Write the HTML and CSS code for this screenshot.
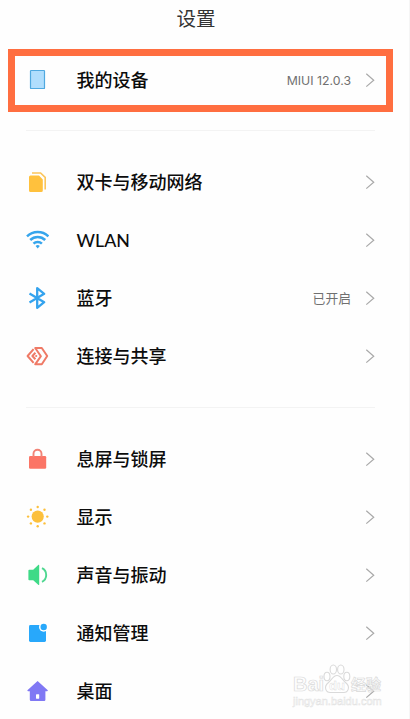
FILE: index.html
```html
<!doctype html>

<html lang="zh-CN">
<head>
  <meta charset="utf-8">

  <title>设置</title>
  <link rel="stylesheet" href="styles.css">
</head>

<body>
  <svg class="defs">
    <symbol id="arrow" viewBox="0 0 10 16">
      <path d="M1.3 1.8L8.7 8.2L1.3 14.6" fill="none" stroke="#a9a9a9" stroke-width="1.2"/>
    </symbol>
  </svg>
  <div class="page">
    <h1 class="title">设置</h1>

    <div class="highlight">
      <div class="row">
        <svg class="icon" viewBox="0 0 24 24">
          <rect x="5.5" y="2.5" width="14" height="18" rx="0.6" fill="#b0defd" stroke="#4fa9e0" stroke-width="1.2"/>
        </svg>
        <span class="label">我的设备</span>
        <span class="value latin">MIUI 12.0.3</span>
        <svg class="arrow"><use href="#arrow"/></svg>
      </div>
    </div>

    <div class="group">
      <div class="row">
        <svg class="icon" viewBox="0 0 24 24">
          <path d="M5.5 5.6H14L17.8 9.4V20.5a1.5 1.5 0 0 1-1.5 1.5H5.5A1.5 1.5 0 0 1 4 20.5V7.1a1.5 1.5 0 0 1 1.5-1.5z" fill="#ffc13d"/>
          <path d="M7 3H15.6L20.2 7.4V19.5" fill="none" stroke="#fbc55a" stroke-width="1.6"/>
        </svg>
        <span class="label">双卡与移动网络</span>
        <svg class="arrow"><use href="#arrow"/></svg>
      </div>
      <div class="row">
        <svg class="icon" viewBox="0 0 24 24">
          <g fill="none" stroke="#36a5ec" stroke-width="2.5">
            <path d="M2 8.3a15.4 15.4 0 0 1 21.4 0"/>
            <path d="M5.2 12a10.7 10.7 0 0 1 15 0"/>
            <path d="M8.5 15.7a6 6 0 0 1 8.4 0"/>
          </g>
          <path d="M10.6 18.1a3 3 0 0 1 4.2 0L12.7 20.4z" fill="#36a5ec"/>
        </svg>
        <span class="label latin">WLAN</span>
        <svg class="arrow"><use href="#arrow"/></svg>
      </div>
      <div class="row">
        <svg class="icon" viewBox="0 0 24 24">
          <path d="M4.5 7.5L19.2 16.2L12.2 21.8V2.2L19.2 7.8L4.5 16.5" fill="none" stroke="#34a3ee" stroke-width="2.3" stroke-linejoin="round"/>
        </svg>
        <span class="label">蓝牙</span>
        <span class="value">已开启</span>
        <svg class="arrow"><use href="#arrow"/></svg>
      </div>
      <div class="row">
        <svg class="icon" viewBox="0 0 24 24">
          <g fill="none" stroke="#ef7a66" stroke-width="2" stroke-linejoin="round">
            <path d="M8.6 5.2L2.6 12L8.6 18.8"/>
            <path d="M10.2 4H16.8L22.2 12L16.8 20.3H10.2L15.9 12.2Z"/>
            <path d="M10.4 8.8L7.4 12L10.4 15.2"/>
          </g>
          <circle cx="11.2" cy="12" r="1.1" fill="#ef7a66"/>
        </svg>
        <span class="label">连接与共享</span>
        <svg class="arrow"><use href="#arrow"/></svg>
      </div>
    </div>

    <div class="group">
      <div class="row">
        <svg class="icon" viewBox="0 0 24 24">
          <rect x="4" y="9" width="17.2" height="12.7" rx="1.3" fill="#fb7566"/>
          <path d="M8.5 10V6.8a4 4 0 0 1 8 0V10" fill="none" stroke="#f28376" stroke-width="1.9"/>
        </svg>
        <span class="label">息屏与锁屏</span>
        <svg class="arrow"><use href="#arrow"/></svg>
      </div>
      <div class="row">
        <svg class="icon" viewBox="0 0 24 24">
          <g fill="#fcc03c">
            <circle cx="12.7" cy="11.6" r="6.1"/>
            <circle cx="12.7" cy="2" r="1.2"/>
            <circle cx="19.5" cy="4.8" r="1.2"/>
            <circle cx="22.3" cy="11.6" r="1.2"/>
            <circle cx="19.5" cy="18.4" r="1.2"/>
            <circle cx="12.7" cy="21.2" r="1.2"/>
            <circle cx="5.9" cy="18.4" r="1.2"/>
            <circle cx="3.1" cy="11.6" r="1.2"/>
            <circle cx="5.9" cy="4.8" r="1.2"/>
          </g>
        </svg>
        <span class="label">显示</span>
        <svg class="arrow"><use href="#arrow"/></svg>
      </div>
      <div class="row">
        <svg class="icon" viewBox="0 0 24 24">
          <path d="M4.2 6.8H8.2L13.5 1.8Q14.2 1.4 14.2 2.4V21.4Q14.2 22.4 13.5 22L8.2 17.2H4.2Q3.4 17.2 3.4 16.4V7.6Q3.4 6.8 4.2 6.8z" fill="#3fda87"/>
          <path d="M17 5.2C22.6 8 22.6 16 17 18.8" fill="none" stroke="#4fd790" stroke-width="1.9"/>
        </svg>
        <span class="label">声音与振动</span>
        <svg class="arrow"><use href="#arrow"/></svg>
      </div>
      <div class="row">
        <svg class="icon" viewBox="0 0 24 24">
          <rect x="4" y="4" width="17" height="17" rx="1.4" fill="#28a8fb"/>
          <circle cx="18.7" cy="6" r="4.7" fill="#fff"/>
          <circle cx="18.7" cy="6" r="3.2" fill="#28a8fb"/>
        </svg>
        <span class="label">通知管理</span>
        <svg class="arrow"><use href="#arrow"/></svg>
      </div>
      <div class="row">
        <svg class="icon" viewBox="0 0 24 24">
          <path d="M12.6 2L22.8 11.2Q23 12.2 22 12.2H20.4V20.8Q20.4 22 19.2 22H6Q4.8 22 4.8 20.8V12.2H3.2Q2.2 12.2 2.4 11.2z" fill="#8078f4"/>
          <rect x="11" y="15.3" width="3.2" height="4.4" rx="0.4" fill="#fff"/>
        </svg>
        <span class="label">桌面</span>
        <svg class="arrow"><use href="#arrow"/></svg>
      </div>
    </div>

    <div class="watermark">
      <div class="brand">
        <span class="bai">Bai</span>
        <svg class="paw" viewBox="0 0 28 30">
          <g fill="#fff" stroke="#dadada" stroke-width="1.1">
            <ellipse cx="4" cy="12.5" rx="3" ry="4.2"/>
            <ellipse cx="10.3" cy="5.5" rx="3.2" ry="4.5"/>
            <ellipse cx="17.8" cy="5.5" rx="3.2" ry="4.5"/>
            <ellipse cx="23.8" cy="12.5" rx="3" ry="4.2"/>
            <path d="M14 11.5C18 11.5 19.5 16 22.5 18.5C28 23 25 29 20 28.5H8C3 29 0 23 5.5 18.5C8.5 16 10 11.5 14 11.5z"/>
          </g>
          <text x="14" y="26" class="du">du</text>
        </svg>
        <span class="jingyan">经验</span>
      </div>
      <div class="site">jingyan.baidu.com</div>
    </div>
  </div>
</body>
</html>
```
FILE: styles.css
```css
body{
  margin: 0;
  background-color: #fefefe;
  font-family: "Noto Sans CJK SC", sans-serif;
  color: #0c0c0c;
}
.defs{
  display: block;
  width: 0;
  height: 0;
}
.page{
  position: relative;
  box-sizing: border-box;
  width: 410px;
  height: 719px;
  overflow: hidden;
  border-right: 1px solid #f5f5f5;
}
.title{
  margin: 0 0 13px;
  padding-right: 17px;
  height: 36px;
  line-height: 36px;
  font-size: 19.5px;
  font-weight: 400;
  text-align: center;
  color: #333;
}
.highlight{
  box-sizing: border-box;
  width: 385px;
  height: 63px;
  margin-left: 8px;
  border: 7px solid #ff6e40;
}
.highlight .row{
  height: 48px;
  padding: 0 11px 0 10px;
}
.group{
  margin: 18px 34px 0 26px;
  padding-top: 22px;
  border-top: 1px solid #f3f3f3;
}
.group + .group{
  margin-top: 22px;
}
.row{
  display: flex;
  align-items: center;
  height: 58px;
}
.group .row{
  margin-left: -1px;
}
.icon{
  flex: none;
  width: 24px;
  height: 24px;
  margin-right: 27.5px;
}
.label{
  flex: 1;
  padding-bottom: 2px;
  font-size: 18px;
  line-height: 26px;
  font-weight: 500;
  white-space: nowrap;
}
.label.latin{
  padding-bottom: 0;
  font-family: Lato, "Noto Sans CJK SC", sans-serif;
  font-size: 17.8px;
}
.value{
  margin-right: 14px;
  padding-bottom: 1px;
  font-size: 12.8px;
  color: #707070;
}
.value.latin{
  padding-bottom: 0;
  font-family: Inter, "Noto Sans CJK SC", sans-serif;
  font-size: 12.3px;
}
.arrow{
  flex: none;
  width: 10px;
  height: 16px;
}

/* site mark in the lower right corner */
.watermark{
  position: absolute;
  left: 293px;
  top: 664px;
  width: 92px;
  font-family: "Liberation Sans", "Noto Sans CJK SC", sans-serif;
  color: rgba(255,255,255,0.5);
  -webkit-text-stroke: 0.7px #dadada;
}
.brand{
  display: flex;
  align-items: flex-end;
  height: 30px;
  font-weight: 700;
}
.bai{
  width: 30px;
  font-size: 20px;
  line-height: 20px;
}
.paw{
  flex: none;
  width: 28px;
  height: 30px;
}
.du{
  font-size: 13px;
  text-anchor: middle;
  fill: #fff;
  stroke: #d8d8d8;
  stroke-width: 0.4px;
  -webkit-text-stroke: 0;
}
.jingyan{
  font-size: 15px;
  line-height: 18px;
}
.site{
  font-size: 11px;
  line-height: 14px;
  -webkit-text-stroke: 0.5px #e2e2e2;
}
```
